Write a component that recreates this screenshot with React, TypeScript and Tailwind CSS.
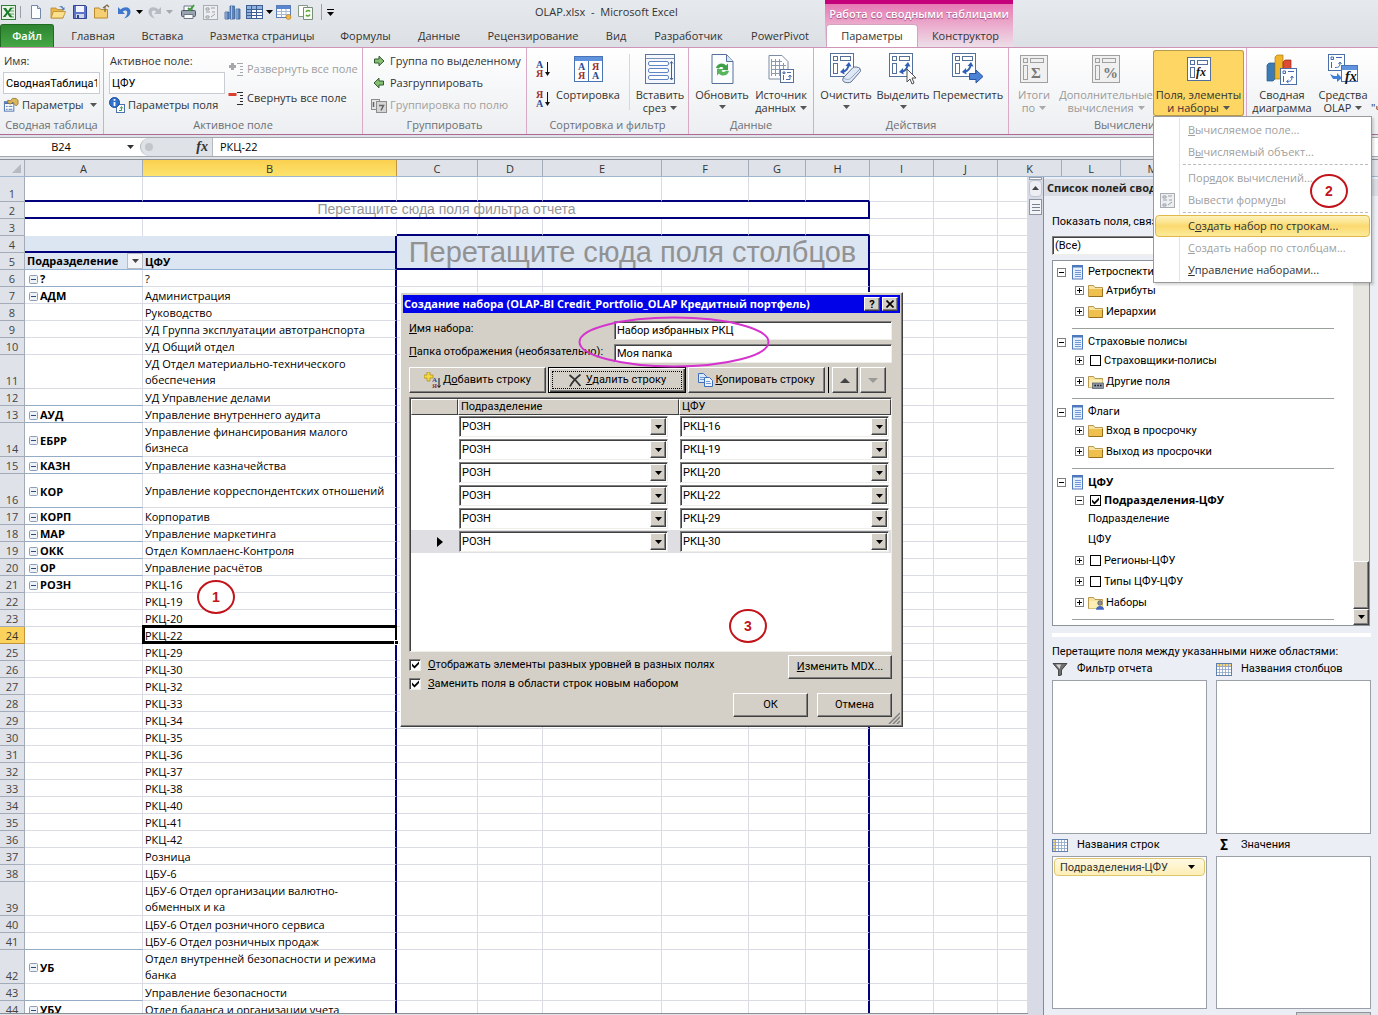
import React from 'react';
import clsx from 'clsx';

const RAISED = 'bg-[#d4d0c8] border border-white border-r-[#404040] border-b-[#404040] shadow-[inset_-1px_-1px_0_#808080]';
const SUNKEN = 'bg-white border border-[#808080] border-r-[#f0eee8] border-b-[#f0eee8] shadow-[inset_1px_1px_0_#404040]';
const UI_FONT = "font-['Open_Sans',sans-serif]";
const FORM_FONT = "font-['Roboto',sans-serif]";

/* ---------- icons ---------- */

const Caret = ({ className = 'text-[#555]' }: { className?: string }) => (
  <svg width="7" height="4" viewBox="0 0 7 4" className={clsx('inline-block shrink-0', className)}>
    <path d="M0 0h7L3.500 4z" fill="currentColor" />
  </svg>
);

const ExcelLogo = () => (
  <svg width="17" height="17" viewBox="0 0 17 17">
    <rect x="1.500" y="1.500" width="14" height="14" fill="#e9f5e4" stroke="#2e7d3a" />
    <path d="M10 4h4M10 7h4M10 10h4M10 13h4" stroke="#5ba35f" />
    <path d="M3 4h3l2 3 2-3h2.500L9 8.500l3.500 4.500h-3L7.500 10 5.500 13H2.800l3.500-4.500z" fill="#1e7a31" />
  </svg>
);

const NewDoc = () => (
  <svg width="16" height="16" viewBox="0 0 16 16">
    <path d="M3.500 1.500h6l3 3v10h-9z" fill="#fdfeff" stroke="#7488a8" />
    <path d="M9.500 1.500v3h3" fill="#d6e0ef" stroke="#7488a8" />
  </svg>
);

const OpenFolder = () => (
  <svg width="16" height="16" viewBox="0 0 16 16">
    <path d="M1 4h5l1 1.500h6V14H1z" fill="#e8b64a" stroke="#b98a2b" strokeWidth=".8" />
    <path d="M3.500 7.500H15.500L13 14H1z" fill="#fbe08d" stroke="#b98a2b" strokeWidth=".8" />
    <path d="M9 3c2-2 4-1 4.500 1l1-1v3h-3l1-1c-.5-1.500-2-2-3.500-2z" fill="#5a7fb8" />
  </svg>
);

const SaveIcon = () => (
  <svg width="16" height="16" viewBox="0 0 16 16">
    <path d="M1.500 1.500h12l1 1v12h-13z" fill="#5d74c9" stroke="#33448f" />
    <rect x="4" y="2" width="8" height="6" fill="#f2f5fd" />
    <rect x="4" y="10" width="8" height="4" fill="#cfd6ea" />
    <rect x="5" y="11" width="2" height="3" fill="#33448f" />
  </svg>
);

const FolderUp = () => (
  <svg width="16" height="16" viewBox="0 0 16 16">
    <path d="M.5 4h5l1 1.500h7V14H.5z" fill="#f6cf72" stroke="#b98a2b" />
    <path d="M11 8V2M9 4l4-3 2 2" stroke="#7b6a46" fill="none" strokeWidth="1.200" />
  </svg>
);

const UndoIcon = ({ color }: { color: string }) => (
  <svg width="15" height="15" viewBox="0 0 15 15">
    <path d="M1 2v7h7L5.800 6.800C7.500 5 10 5.200 10.200 7.500c.1 2-1 4-3.200 6 4-1 6.500-3.500 6.500-6.800C13.500 2 8 .500 3.500 4.500z" fill={color} />
  </svg>
);

const PrinterIcon = () => (
  <svg width="17" height="16" viewBox="0 0 17 16">
    <path d="M4 6V2h8v4" fill="#fff" stroke="#6d7686" />
    <rect x="1.500" y="6.500" width="14" height="6" rx="1" fill="#9aa3b0" stroke="#4f5866" />
    <path d="M4 10.500h9v4H4z" fill="#fff" stroke="#6d7686" />
    <path d="M8 4l2 2 4-5" stroke="#3c9a3c" strokeWidth="2" fill="none" />
  </svg>
);

const GraySheet = () => (
  <svg width="15" height="15" viewBox="0 0 15 15">
    <rect x=".5" y=".5" width="14" height="14" fill="#eceef0" stroke="#a9adb3" />
    <path d="M3 3h3v2H3zM8 3h4M3 7h4M9 7h3M3 11h3v2H3zM8 12l4-3" stroke="#9b9fa6" fill="none" />
  </svg>
);

const BarsIcon = () => (
  <svg width="17" height="16" viewBox="0 0 17 16">
    <path d="M1 8h4v7H1zM6 2h4.500v13H6zM12 5h4v10h-4z" fill="#5c84bd" stroke="#3b5f96" strokeWidth=".8" />
    <path d="M2 8v7M7.500 2v13M13 5v10" stroke="#a7c2e6" />
  </svg>
);

const TableIcon = () => (
  <svg width="17" height="15" viewBox="0 0 17 15">
    <rect x=".5" y=".5" width="16" height="13" fill="#fff" stroke="#3d5f91" />
    <path d="M1 1h15v3H1zM1 1h4v12H1z" fill="#8fb2de" />
    <path d="M1 4.500h15M1 7.500h15M1 10.500h15M5.500 1v13M10.500 1v13" stroke="#3d5f91" />
  </svg>
);

const FormIcon = () => (
  <svg width="16" height="15" viewBox="0 0 16 15">
    <rect x=".5" y=".5" width="14" height="12" fill="#fff" stroke="#5b7db5" />
    <path d="M1 1h13v3H1z" fill="#5b86cf" />
    <path d="M1 6.500h13M1 9.500h13M5.500 4v8M10 4v8" stroke="#a8b8d0" />
    <circle cx="12.500" cy="12" r="2.500" fill="#f0b64b" stroke="#b5822b" strokeWidth=".6" />
  </svg>
);

const SheetsIcon = () => (
  <svg width="16" height="16" viewBox="0 0 16 16">
    <path d="M.5 1.500h9v11h-9z" fill="#fff" stroke="#8a9a8a" />
    <path d="M5.500 3.500h9v12h-9z" fill="#f7fbf4" stroke="#7c8c7c" />
    <path d="M8 8c1-2 3-2 4-.5M12 10.500c-1 2-3 2-4 .5" stroke="#5ba52f" strokeWidth="1.500" fill="none" />
  </svg>
);

const PropsIcon = () => (
  <svg width="17" height="16" viewBox="0 0 17 16">
    <rect x="1.500" y="4.500" width="10" height="10" fill="#fff" stroke="#4a72b0" />
    <path d="M2 5h9v2H2z" fill="#4a72b0" />
    <path d="M3 9.500h2M6 9.500h4M3 12.500h2M6 12.500h4" stroke="#4a72b0" />
    <path d="M5 3l3 .500L10 1h4l2 2v4l-2 2-2-2-1.500-2L8 7 5 6z" fill="#dcb65c" stroke="#8d6b26" strokeWidth=".8" />
  </svg>
);

const FieldInfo = () => (
  <svg width="16" height="16" viewBox="0 0 16 16">
    <rect x="7.500" y="7.500" width="8" height="8" fill="#fff" stroke="#4a72b0" />
    <path d="M10 13.500h2.500v-3M11 11.500l1.500-2 1.500 2" stroke="#3a9a4a" fill="none" />
    <circle cx="5.500" cy="5.500" r="5" fill="#2f73cf" stroke="#1d4d96" />
    <path d="M5.500 2v1.800M5.500 5v4" stroke="#fff" strokeWidth="1.800" />
  </svg>
);

const ExpandIcon = ({ minus }: { minus?: boolean }) => (
  <svg width="16" height="15" viewBox="0 0 16 15">
    {minus ? <rect x=".5" y="2" width="8" height="3" fill="#d9402f" /> : <path d="M3 1h3v2h2v3H6v2H3V6H1V3h2z" fill="#a5a8ab" />}
    <path d="M9 1.500h6M12 4.500h3M12 7.500h3M12 10.500h3M9 13.500h6" stroke={minus ? '#2b2b2b' : '#a5a8ab'} />
  </svg>
);

const GreenArrow = ({ left }: { left?: boolean }) => (
  <svg width="12" height="12" viewBox="0 0 12 12" className={left ? 'rotate-180' : ''}>
    <path d="M1.500 4H6V1.200L11 6 6 10.800V8H1.500z" fill="#86bf74" stroke="#2f5a2c" />
  </svg>
);

const GroupField = () => (
  <svg width="16" height="15" viewBox="0 0 16 15">
    <rect x=".5" y="1.500" width="8" height="10" fill="#e5e5e5" stroke="#8d8d8d" />
    <rect x="5.500" y="3.500" width="10" height="11" fill="#d5d5d5" stroke="#8d8d8d" />
    <path d="M8 7.500h4.500l-2.500 5M2.500 4v5" stroke="#666" strokeWidth="1.500" fill="none" />
  </svg>
);

const SortIcon = ({ desc }: { desc?: boolean }) => (
  <svg width="15" height="18" viewBox="0 0 15 18" fontFamily="Liberation Serif" fontWeight="bold" fontSize="10">
    <text x="0" y="8" fill={desc ? '#9b3030' : '#2d4a91'}>{desc ? 'Я' : 'А'}</text>
    <text x="0" y="17" fill={desc ? '#2d4a91' : '#9b3030'}>{desc ? 'А' : 'Я'}</text>
    <path d="M11.500 2v12" stroke="#111" />
    <path d="M9 12h5l-2.500 4z" fill="#111" />
  </svg>
);

const SortBig = () => (
  <svg width="29" height="27" viewBox="0 0 29 27" fontFamily="Liberation Serif" fontWeight="bold" fontSize="10">
    <rect x=".5" y=".5" width="28" height="25" fill="#fff" stroke="#4a73b5" />
    <path d="M1 1h27v4H1z" fill="#5f93de" />
    <path d="M14.500 5v20" stroke="#4a73b5" />
    <text x="4" y="14" fill="#2d4a91">А</text>
    <text x="4" y="23" fill="#9b3030">Я</text>
    <text x="18" y="14" fill="#9b3030">Я</text>
    <text x="18" y="23" fill="#2d4a91">А</text>
  </svg>
);

const SlicerBig = () => (
  <svg width="30" height="30" viewBox="0 0 30 30">
    <rect x=".5" y=".5" width="29" height="29" fill="#f4f8fe" stroke="#5d7499" />
    <path d="M1 4.500h28" stroke="#7d92b5" />
    {[7, 14, 21].map(y => (
      <rect key={y} x="3.500" y={y + 0.5} width="20" height="4" rx="1.500" fill="#fff" stroke="#5f86c4" />
    ))}
    <path d="M26.500 8v17M25 9.500l1.500-2 1.500 2M25 24l1.500 2 1.500-2" stroke="#4a5f85" fill="none" />
  </svg>
);

const RefreshBig = () => (
  <svg width="23" height="30" viewBox="0 0 23 30">
    <path d="M1 .500h14.500L22 7.500V29.500H1z" fill="#fbfdff" stroke="#56709c" />
    <path d="M15.500 1v6.500H22" fill="#dbe6f5" stroke="#56709c" />
    <path d="M5 14c1-5 7.500-6 10-2.500L17 9.500v6.500h-6.500l2-2c-1.500-1.500-4-1-4.500.5z" fill="#3fa047" />
    <path d="M18 17c-1 5-7.500 6-10 2.500L6 21.500V15h6.500l-2 2c1.500 1.500 4 1 4.500-.5z" fill="#57b55c" />
  </svg>
);

const SourceBig = () => (
  <svg width="26" height="29" viewBox="0 0 26 29">
    <path d="M1 .500h13L20 6.500V24H1z" fill="#fff" stroke="#7d8ba3" />
    <path d="M3.500 4v17M7.500 4v17M11.500 4v17M15.500 8v13M3 6.500h11M3 10.500h15M3 14.500h15M3 18.500h15" stroke="#8d99ad" />
    <rect x="12.500" y="14.500" width="13" height="13" fill="#fff" stroke="#56709c" />
    <path d="M15 17h2v1.500h-2zM19 17.500h4M15.500 20v5M18 24.500h4v-4M20.500 22l1.500-2 1.500 2" stroke="#4a6ea8" fill="none" />
  </svg>
);

/* empty pivot layout, the base of most of the big buttons */
const PivotFrame = () => (
  <g stroke="#56709c" fill="#fff">
    <rect x=".5" y=".5" width="23" height="23" />
    <rect x="3.500" y="3.500" width="4" height="4" />
    <rect x="10.500" y="3.500" width="10" height="4" />
    <rect x="3.500" y="10.500" width="4" height="10" />
  </g>
);

const PivotArrow = () => (
  <g>
    <path d="M13 18.500c3-.5 5-3 5.500-6" stroke="#2f5fb5" strokeWidth="1.800" fill="none" />
    <path d="M15.500 13l3.500-4 2.500 4.500zM14 15l-4 4 4.500 2.500z" fill="#2f5fb5" />
  </g>
);

const ClearBig = () => (
  <svg width="32" height="32" viewBox="0 0 32 32">
    <PivotFrame />
    <PivotArrow />
    <path d="M14 24L23 14.500c1-1 6-.500 7 1s.5 3-.5 4L21 29c-1 1-6 1-7.500-.5s-.5-3.500.500-4.500z" fill="#dfe8f5" stroke="#5a6e8f" />
    <path d="M14 25c2 2 5 2 7 0l9-9" stroke="#93a6c4" fill="none" />
  </svg>
);

const SelectBig = () => (
  <svg width="28" height="32" viewBox="0 0 28 32">
    <PivotFrame />
    <PivotArrow />
    <path d="M18 16v13l3-3 2 5 2-1-2-5h4z" fill="#fff" stroke="#4d4d4d" />
  </svg>
);

const MoveBig = () => (
  <svg width="32" height="32" viewBox="0 0 32 32">
    <PivotFrame />
    <PivotArrow />
    <path d="M17.500 20.500H24V17l7 6.500-7 6.500v-3.500h-6.500z" fill="#4c82d6" stroke="#2b55a0" />
  </svg>
);

const CalcBig = ({ sign }: { sign: string }) => (
  <svg width="28" height="28" viewBox="0 0 28 28">
    <g stroke="#a0a0a0" fill="#f0f0f0">
      <rect x=".5" y=".5" width="27" height="27" />
      <rect x="3.500" y="3.500" width="4" height="4" />
      <rect x="10.500" y="3.500" width="13" height="4" />
      <rect x="3.500" y="10.500" width="4" height="14" />
    </g>
    <text x="11" y="23" fontSize="15" fontWeight="bold" fontFamily="Liberation Serif" fill="#777">{sign}</text>
  </svg>
);

const FxBig = () => (
  <svg width="24" height="24" viewBox="0 0 24 24">
    <PivotFrame />
    <text x="9" y="19" fontSize="12" fontStyle="italic" fontWeight="bold" fontFamily="Liberation Serif" fill="#111">fx</text>
  </svg>
);

const ChartBig = () => (
  <svg width="32" height="31" viewBox="0 0 32 31">
    <path d="M1 11l2-2h6v16l-2 2H1z" fill="#3d7bb5" stroke="#24598c" strokeWidth=".7" />
    <path d="M9 3l2-2h6v24H9z" fill="#f0b52a" stroke="#ad7d12" strokeWidth=".7" />
    <path d="M17 8l2-2h6v16h-8z" fill="#dd4c35" stroke="#97291a" strokeWidth=".7" />
    <rect x="14.500" y="14.500" width="16" height="16" fill="#fff" stroke="#4a6ea8" />
    <path d="M17 17h2.500v2.500H17zM22 17.500h6M17.500 22v6M21 27.500c4 0 5-1 5-5M24.500 24l1.500-2 1.500 2M22.500 26l-2 1.500 2 1.500" stroke="#3f68b0" fill="none" />
  </svg>
);

const OlapBig = () => (
  <svg width="32" height="31" viewBox="0 0 32 31">
    <rect x="1.500" y=".5" width="16" height="16" fill="#fff" stroke="#4a6ea8" />
    <path d="M4 3h2.500v2.500H4zM9 3.500h6M4.500 8v6M8 13.500c4 0 5-1 5-5M11.500 10l1.500-2 1.500 2" stroke="#3f68b0" fill="none" />
    <path d="M3 20l4 2h3v-3l5 5-5 4v-3H6z" fill="#3f7fd6" />
    <rect x="14.500" y="11.500" width="16" height="16" fill="#fff" stroke="#4a73b5" />
    <path d="M15 12h15v4H15z" fill="#5f93de" />
    <text x="18" y="27" fontSize="14" fontStyle="italic" fontWeight="bold" fontFamily="Liberation Serif" fill="#111">fx</text>
  </svg>
);

const PageIcon = () => (
  <svg width="12" height="15" viewBox="0 0 12 15" className="shrink-0">
    <rect x=".5" y=".5" width="10" height="13.500" fill="#e6effc" stroke="#4f79bd" />
    <path d="M1 1.500h9" stroke="#4f79bd" strokeWidth="2" />
    <path d="M3 5.500h6M3 7.500h6M3 9.500h6M3 11.500h6" stroke="#6f98d6" />
  </svg>
);

const FolderIcon = ({ kind }: { kind?: string }) => (
  <svg width="16" height="14" viewBox="0 0 16 14" className="shrink-0">
    <path d="M.5 1.500h5l1.500 2h7.500v9H.5z" fill="#f7e3a0" stroke="#a8812f" strokeWidth=".8" />
    <path d="M1 5h13.500v7.500H1z" fill={kind ? '#fbeeb4' : '#efc04e'} />
    {!kind && <path d="M1 12.500h13.500V5" stroke="#94701f" fill="none" />}
    {kind === 'more' && (
      <g>
        <rect x="4.500" y="8" width="11" height="5.500" fill="#8f98a8" stroke="#4d5664" strokeWidth=".7" />
        <path d="M6.500 10.500h1.500M9.300 10.500h1.500M12 10.500h1.500" stroke="#111" strokeWidth="1.500" />
      </g>
    )}
    {kind === 'set' && (
      <g>
        <circle cx="12" cy="7" r="2.300" fill="#8b8f96" stroke="#444" strokeWidth=".6" />
        <path d="M8 13.800c0-5 8-5 8 0z" fill="#3f66c4" />
      </g>
    )}
  </svg>
);

const Expander = ({ open }: { open?: boolean }) => (
  <svg width="9" height="9" viewBox="0 0 9 9" className="shrink-0">
    <rect x=".5" y=".5" width="8" height="8" fill="#fff" stroke="#808080" />
    <path d={open ? 'M2 4.500h5' : 'M2 4.500h5M4.500 2v5'} stroke="#000" />
  </svg>
);

const FilterIcon = () => (
  <svg width="16" height="13" viewBox="0 0 16 13">
    <path d="M1 .500h14L9.500 7v5l-3 .8V7z" fill="#6e6e6e" stroke="#2f2f2f" strokeWidth=".8" />
    <path d="M4 1.500h5L7.500 6z" fill="#d5d5d5" />
  </svg>
);

const LabelsIcon = ({ rows }: { rows?: boolean }) => (
  <svg width="16" height="13" viewBox="0 0 16 13">
    <rect x=".5" y=".5" width="15" height="12" fill="#fff" stroke="#5f7fae" />
    <path d={rows ? 'M1 1h3v11H1z' : 'M1 1h14v3H1z'} fill="#f2d27b" />
    <path d="M1 3.500h14M1 6.500h14M1 9.500h14M3.500 1v11M6.500 1v11M9.500 1v11M12.500 1v11" stroke="#8aa2c6" strokeWidth=".8" />
  </svg>
);

/* ---------- ribbon ---------- */

const QAT: { name: string; icon: React.ReactNode; className?: string }[] = [
  { name: 'Создать', icon: <NewDoc /> },
  { name: 'Открыть', icon: <OpenFolder /> },
  { name: 'Сохранить', icon: <SaveIcon /> },
  { name: 'Папка', icon: <FolderUp /> },
  { name: 'Отменить', icon: <UndoIcon color="#3f77cc" /> },
  { name: 'Список отмены', icon: <Caret className="text-black" />, className: 'w-2' },
  { name: 'Вернуть', icon: <span className="-scale-x-100"><UndoIcon color="#b7bcc3" /></span> },
  { name: 'Список возврата', icon: <Caret className="text-[#a5a9ae]" />, className: 'w-2' },
  { name: 'Печать', icon: <PrinterIcon />, className: 'w-[22px] ml-1' },
  { name: 'Лист', icon: <GraySheet /> },
  { name: 'Диаграмма', icon: <BarsIcon /> },
  { name: 'Таблица', icon: <TableIcon /> },
  { name: 'Варианты таблицы', icon: <Caret className="text-black" />, className: 'w-2' },
  { name: 'Форма', icon: <FormIcon /> },
  { name: 'Обновить все', icon: <SheetsIcon /> },
];

const TABS = [
  { label: 'Главная', width: 'w-[70px]' },
  { label: 'Вставка', width: 'w-[69px]' },
  { label: 'Разметка страницы', width: 'w-[130px]' },
  { label: 'Формулы', width: 'w-[77px]' },
  { label: 'Данные', width: 'w-[70px]' },
  { label: 'Рецензирование', width: 'w-[118px]' },
  { label: 'Вид', width: 'w-[48px]' },
  { label: 'Разработчик', width: 'w-[97px]' },
  { label: 'PowerPivot', width: 'w-[86px]' },
];

const Header = () => (
  <header className="flex h-[47px] shrink-0 bg-linear-to-b from-[#e6eaee] to-[#dcdfe4]">
    <div className="flex flex-col shrink-0">
      <div className="flex h-6 items-center text-[#333]">
        <div className="flex w-[535px] items-center">
          <ExcelLogo />
          <span className="ml-[3px] mr-1 h-3 w-px bg-[#9aa0a8]" />
          {QAT.map(item => (
            <button key={item.name} aria-label={item.name} className={clsx('flex h-5 items-center justify-center', item.className || 'w-[22px]')}>
              {item.icon}
            </button>
          ))}
          <span className="ml-1 h-4 w-px bg-[#9aa0a8]" />
          <button aria-label="Настройка панели" className="flex w-4 flex-col items-center gap-0.5">
            <span className="h-px w-[7px] bg-black" />
            <Caret className="text-black" />
          </button>
        </div>
        <h1>OLAP.xlsx&nbsp; -&nbsp; Microsoft Excel</h1>
      </div>
      <nav className="flex h-[23px] items-stretch text-[#333]">
        <button className="mr-1 w-[54px] rounded-t-[3px] border border-b-0 border-[#1f6b22] bg-linear-to-b from-[#2f8431] to-[#45a845] font-semibold text-white">Файл</button>
        {TABS.map(tab => (
          <button key={tab.label} className={clsx('whitespace-nowrap', tab.width)}>{tab.label}</button>
        ))}
      </nav>
    </div>
    <div className="ml-0.5 flex w-[188px] shrink-0 flex-col border-t-4 border-[#c4007a] bg-linear-to-b from-[#e579b4] to-[#ecdfe8]">
      <div className="flex h-5 items-center justify-center whitespace-nowrap font-semibold text-white [text-shadow:0_1px_1px_#a04a7c]">
        Работа со сводными таблицами
      </div>
      <nav className="flex h-[23px] text-[#333]">
        <button className="ml-px w-[92px] rounded-t-sm border border-b-0 border-[#d5a3c0] bg-white">Параметры</button>
        <button className="flex-1">Конструктор</button>
      </nav>
    </div>
  </header>
);

interface BigButtonProps {
  icon: React.ReactNode;
  lines: string[];
  width: string;
  caret?: boolean;
  disabled?: boolean;
  active?: boolean;
}

const BigButton = ({ icon, lines, width, caret, disabled, active }: BigButtonProps) => (
  <button
    disabled={disabled}
    className={clsx(
      'flex h-[66px] shrink-0 flex-col items-center whitespace-nowrap rounded-[3px] leading-[13px]',
      width,
      disabled && 'text-[#9a9a9a]',
      active && 'bg-[#fdd663] ring-1 ring-[#b89b4a] ring-inset'
    )}
  >
    <span className="flex h-[38px] items-center justify-center">{icon}</span>
    {lines.map((line, i) => (
      <span key={line} className="flex items-center gap-1">
        {line}
        {caret && lines.length > 1 && i === 1 && <Caret className={disabled ? 'text-[#aaa]' : undefined} />}
      </span>
    ))}
    {caret && lines.length === 1 && <span className="flex h-3 items-center"><Caret /></span>}
  </button>
);

const SmallButton = ({ icon, label, disabled, caret }: { icon: React.ReactNode; label: string; disabled?: boolean; caret?: boolean }) => (
  <button disabled={disabled} className={clsx('flex h-[22px] items-center whitespace-nowrap', disabled && 'text-[#a0a0a0]')}>
    <span className="mr-[3px] flex w-4 justify-center">{icon}</span>
    {label}
    {caret && <span className="ml-1.5 flex"><Caret /></span>}
  </button>
);

const Group = ({ title, width, children }: { title: string; width: string; children: React.ReactNode }) => (
  <section className={clsx('flex flex-col border-r border-[#d9a9c6] pt-0.5 text-[#333]', width)}>
    <div className="flex h-[67px]">{children}</div>
    <h2 className="h-4 whitespace-nowrap text-center leading-4 text-[#6b6f75]">{title}</h2>
  </section>
);

const Ribbon = () => (
  <div className="flex h-[88px] shrink-0 overflow-hidden border-y border-t-[#cf95b8] border-b-[#b06a96] bg-linear-to-b from-white to-[#eceef1]">
    <Group title="Сводная таблица" width="w-[104px] shrink-0">
      <div className="flex flex-1 flex-col px-[3px]">
        <label htmlFor="pt-name" className="h-[22px] px-px leading-[22px]">Имя:</label>
        <input id="pt-name" defaultValue="СводнаяТаблица1" className={clsx('h-[22px] w-full border border-[#c9ccd2] bg-white px-[2px] text-black', FORM_FONT)} />
        <SmallButton icon={<PropsIcon />} label="Параметры" caret />
      </div>
    </Group>
    <Group title="Активное поле" width="w-[259px] shrink-0">
      <div className="flex w-[121px] shrink-0 flex-col pl-[5px]">
        <label htmlFor="field-name" className="h-[22px] px-px leading-[22px]">Активное поле:</label>
        <input id="field-name" defaultValue="ЦФУ" className={clsx('h-[22px] w-full border border-[#c9ccd2] bg-white px-[2px] text-black', FORM_FONT)} />
        <SmallButton icon={<FieldInfo />} label="Параметры поля" />
      </div>
      <div className="flex flex-col gap-[7px] py-2 pl-[3px]">
        <SmallButton icon={<ExpandIcon />} label="Развернуть все поле" disabled />
        <SmallButton icon={<ExpandIcon minus />} label="Свернуть все поле" />
      </div>
    </Group>
    <Group title="Группировать" width="w-[164px] shrink-0">
      <div className="flex flex-col pl-2">
        <SmallButton icon={<GreenArrow />} label="Группа по выделенному" />
        <SmallButton icon={<GreenArrow left />} label="Разгруппировать" />
        <SmallButton icon={<GroupField />} label="Группировка по полю" disabled />
      </div>
    </Group>
    <Group title="Сортировка и фильтр" width="w-[162px] shrink-0">
      <div className="flex w-6 shrink-0 flex-col items-end gap-3 pt-[10px]">
        <button aria-label="Сортировать от А до Я"><SortIcon /></button>
        <button aria-label="Сортировать от Я до А"><SortIcon desc /></button>
      </div>
      <BigButton icon={<SortBig />} lines={['Сортировка']} width="w-[74px]" />
      <div className="mx-1 mt-1 h-14 w-px bg-[#d5d8dc]" />
      <BigButton icon={<SlicerBig />} lines={['Вставить', 'срез']} width="w-[52px]" caret />
    </Group>
    <Group title="Данные" width="w-[125px] shrink-0">
      <BigButton icon={<RefreshBig />} lines={['Обновить']} width="w-[66px]" caret />
      <BigButton icon={<SourceBig />} lines={['Источник', 'данных']} width="w-[52px]" caret />
    </Group>
    <Group title="Действия" width="w-[195px] shrink-0">
      <BigButton icon={<ClearBig />} lines={['Очистить']} width="w-[64px]" caret />
      <BigButton icon={<SelectBig />} lines={['Выделить']} width="w-[50px]" caret />
      <BigButton icon={<MoveBig />} lines={['Переместить']} width="w-[80px]" />
    </Group>
    <Group title="Вычисления" width="w-[238px] shrink-0">
      <BigButton icon={<CalcBig sign="Σ" />} lines={['Итоги', 'по']} width="w-[50px]" caret disabled />
      <BigButton icon={<CalcBig sign="%" />} lines={['Дополнительные', 'вычисления']} width="w-[94px]" caret disabled />
      <BigButton icon={<FxBig />} lines={['Поля, элементы', 'и наборы']} width="w-[91px]" caret active />
    </Group>
    <Group title="Сервис" width="flex-1">
      <BigButton icon={<ChartBig />} lines={['Сводная', 'диаграмма']} width="w-[70px]" />
      <BigButton icon={<OlapBig />} lines={['Средства', 'OLAP']} width="w-[52px]" caret />
      <div className="whitespace-nowrap pl-0.5 pt-[51px] leading-[13px]">"что если"</div>
    </Group>
  </div>
);

const FormulaBar = () => (
  <div className="flex h-[25px] shrink-0 items-start border-b border-[#8b9097] bg-[#dfe2e7] pt-0.5">
    <div className="flex h-5 w-full border-y border-[#a3a8b0] bg-white">
      <div className="flex w-[140px] items-center">
        <input aria-label="Имя ячейки" defaultValue="B24" className="w-[122px] text-center text-black" />
        <button aria-label="Список имен" className="flex w-4 justify-center"><Caret className="text-[#333]" /></button>
      </div>
      <div className="flex w-[73px] items-center justify-between rounded-l-full border-l border-r border-[#b5b9c0] bg-[#dfe2e7] pl-1 pr-1">
        <span className="h-2 w-2 rounded-full bg-[#c3c6cb]" />
        <button aria-label="Вставить функцию" className="font-['Liberation_Serif',serif] text-sm font-bold italic leading-none text-[#333]">fx</button>
      </div>
      <input aria-label="Строка формул" defaultValue="РКЦ-22" className="flex-1 px-[7px] text-black" />
    </div>
  </div>
);

/* ---------- sheet ---------- */

const COLUMNS = [
  { name: 'A', width: 'w-[118px]' },
  { name: 'B', width: 'w-[254px]', active: true },
  { name: 'C', width: 'w-[81px]' },
  { name: 'D', width: 'w-[65px]' },
  { name: 'E', width: 'w-[119px]' },
  { name: 'F', width: 'w-[87px]' },
  { name: 'G', width: 'w-[57px]' },
  { name: 'H', width: 'w-[64px]' },
  { name: 'I', width: 'w-[64px]' },
  { name: 'J', width: 'w-[64px]' },
  { name: 'K', width: 'w-[64px]' },
  { name: 'L', width: 'w-[59px]' },
  { name: 'M', width: 'w-[64px]' },
];

const ColumnHeaders = () => (
  <div className="flex h-[17px] shrink-0 overflow-hidden border-b border-[#9eb6ce] bg-[#dfe2e8] text-[#333]">
    <div className="flex w-[25px] shrink-0 items-end justify-end border-r border-[#a3abb8] p-[3px]">
      <svg width="9" height="9" viewBox="0 0 9 9"><path d="M9 0v9H0z" fill="#b5bac3" /></svg>
    </div>
    {COLUMNS.map(col => (
      <div
        key={col.name}
        className={clsx(
          'shrink-0 border-r text-center leading-[18px]',
          col.width,
          col.active ? 'border-[#c2943b] bg-linear-to-b from-[#fbd04f] to-[#fce36c]' : 'border-[#a3abb8]'
        )}
      >
        {col.name}
      </div>
    ))}
  </div>
);

interface RowData {
  a?: string;
  b: string;
  tall?: boolean;
  end?: boolean; // last row of an outer group
}

// rows 6 and on
const ROWS: RowData[] = [
  { a: '?', b: '?', end: true },
  { a: 'АДМ', b: 'Администрация' },
  { b: 'Руководство' },
  { b: 'УД Группа эксплуатации автотранспорта' },
  { b: 'УД Общий отдел' },
  { b: 'УД Отдел материально-технического обеспечения', tall: true },
  { b: 'УД Управление делами', end: true },
  { a: 'АУД', b: 'Управление внутреннего аудита', end: true },
  { a: 'ЕБРР', b: 'Управление финансирования малого бизнеса', tall: true, end: true },
  { a: 'КАЗН', b: 'Управление казначейства', end: true },
  { a: 'КОР', b: 'Управление корреспондентских отношений', tall: true, end: true },
  { a: 'КОРП', b: 'Корпоратив', end: true },
  { a: 'МАР', b: 'Управление маркетинга', end: true },
  { a: 'ОКК', b: 'Отдел Комплаенс-Контроля', end: true },
  { a: 'ОР', b: 'Управление расчётов', end: true },
  { a: 'РОЗН', b: 'РКЦ-16' },
  { b: 'РКЦ-19' },
  { b: 'РКЦ-20' },
  { b: 'РКЦ-22' },
  { b: 'РКЦ-29' },
  { b: 'РКЦ-30' },
  { b: 'РКЦ-32' },
  { b: 'РКЦ-33' },
  { b: 'РКЦ-34' },
  { b: 'РКЦ-35' },
  { b: 'РКЦ-36' },
  { b: 'РКЦ-37' },
  { b: 'РКЦ-38' },
  { b: 'РКЦ-40' },
  { b: 'РКЦ-41' },
  { b: 'РКЦ-42' },
  { b: 'Розница' },
  { b: 'ЦБУ-6' },
  { b: 'ЦБУ-6 Отдел организации валютно-обменных и ка', tall: true },
  { b: 'ЦБУ-6 Отдел розничного сервиса' },
  { b: 'ЦБУ-6 Отдел розничных продаж', end: true },
  { a: 'УБ', b: 'Отдел внутренней безопасности и режима банка', tall: true },
  { b: 'Управление безопасности', end: true },
  { a: 'УБУ', b: 'Отдел баланса и организации учета' },
];

const CELL = 'border-b border-r border-[#d9dce4] p-0';
const NAVY = 'border-[#00007c]';
const LINE = 'pt-0.5 leading-[14px]';

const RowHeader = ({ n }: { n: number }) => (
  <th
    className={clsx(
      'border-b border-r p-0 text-center align-bottom font-normal',
      LINE,
      n === 24 ? 'border-[#c2943b] bg-[#fbd35c] text-[#333]' : 'border-[#a3abb8] bg-[#dfe2e8] text-[#444]'
    )}
  >
    {n}
  </th>
);

const Blanks = ({ count }: { count: number }) => (
  <>
    {Array.from({ length: count }, (_, i) => <td key={i} className={CELL} />)}
  </>
);

const Sheet = () => (
  <div className="min-w-0 flex-1 overflow-hidden border-b border-[#8b9097] bg-white">
    <table className="w-full table-fixed border-separate border-spacing-0 text-black">
      <colgroup>
        <col className="w-[25px]" />
        {COLUMNS.slice(0, 10).map(col => <col key={col.name} className={col.width} />)}
        <col />
      </colgroup>
      <tbody>
        <tr className="h-[25px]">
          <RowHeader n={1} />
          {Array.from({ length: 8 }, (_, i) => (
            <td key={i} className="border-b-2 border-r border-b-[#00007c] border-r-[#d9dce4] p-0" />
          ))}
          <Blanks count={3} />
        </tr>
        <tr className="h-[17px]">
          <RowHeader n={2} />
          <td colSpan={8} className={clsx("border-b-2 border-r-2 p-0 text-center font-['Liberation_Sans',sans-serif] text-[14px] leading-[15px] text-[#959595]", NAVY)}>
            Перетащите сюда поля фильтра отчета
          </td>
          <Blanks count={3} />
        </tr>
        <tr className="h-[17px]">
          <RowHeader n={3} />
          <td className="border-r border-[#d9dce4] p-0" />
          <td className="border-r border-[#d9dce4] p-0" />
          {Array.from({ length: 6 }, (_, i) => (
            <td key={i} className="border-b-2 border-r border-b-[#00007c] border-r-[#d9dce4] p-0" />
          ))}
          <Blanks count={3} />
        </tr>
        <tr className="h-[17px]">
          <RowHeader n={4} />
          <td className={clsx('border-b-2 bg-[#dce5f2] p-0', NAVY)} />
          <td className={clsx('border-b-2 border-r-2 bg-[#dce5f2] p-0', NAVY)} />
          <td colSpan={6} rowSpan={2} className={clsx("border-b-2 border-r-2 bg-[#dce5f2] p-0 text-center font-['Liberation_Sans',sans-serif] text-[29px] leading-[30px] whitespace-nowrap text-[#929292]", NAVY)}>
            Перетащите сюда поля столбцов
          </td>
          <Blanks count={3} />
        </tr>
        <tr className="h-[17px]">
          <RowHeader n={5} />
          <td className="border-b border-[#95b3d7] bg-[#dce5f2] p-0 font-bold">
            <div className="flex h-4 items-center justify-between pl-0.5">
              Подразделение
              <button aria-label="Фильтр" className="flex h-4 w-4 items-center justify-center border border-[#b5bac3] bg-[#f3f5f8]"><Caret className="text-[#444]" /></button>
            </div>
          </td>
          <td className={clsx('border-r-2 border-b border-b-[#95b3d7] border-r-[#00007c] bg-[#dce5f2] p-0 pl-0.5 font-bold', LINE)}>ЦФУ</td>
          <Blanks count={3} />
        </tr>
        {ROWS.map((row, i) => {
          const n = i + 6;
          return (
            <tr key={n} className={row.tall ? 'h-[34px]' : 'h-[17px]'}>
              <RowHeader n={n} />
              <td className={clsx('border-b border-r border-r-[#d9dce4] p-0 align-middle font-bold', row.end ? 'border-b-[#95acc9]' : 'border-b-[#d9dce4]', LINE)}>
                {row.a && (
                  <div className="flex items-center gap-0.5 pl-1">
                    <svg width="9" height="9" viewBox="0 0 9 9">
                      <rect x=".5" y=".5" width="8" height="8" rx="1" fill="#edf2f9" stroke="#8c9cb5" />
                      <path d="M2 4.500h5" stroke="#334a72" />
                    </svg>
                    {row.a}
                  </div>
                )}
              </td>
              <td
                className={clsx(
                  'border-r-2 border-b border-b-[#d9dce4] border-r-[#00007c] p-0 pl-0.5 pr-2 align-middle',
                  row.tall ? 'leading-4' : LINE,
                  n === 24 && 'relative'
                )}
              >
                {row.b}
                {n === 24 && (
                  <div className="absolute -left-px -top-0.5 -right-0.5 -bottom-px border-3 border-black border-r-2">
                    <div className="absolute -bottom-1 -right-1 h-[5px] w-[5px] border border-white bg-black" />
                  </div>
                )}
              </td>
              <Blanks count={5} />
              <td className="border-b border-r-2 border-b-[#d9dce4] border-r-[#00007c] p-0" />
              <Blanks count={3} />
            </tr>
          );
        })}
      </tbody>
    </table>
  </div>
);

const SheetScroll = () => (
  <div className="flex w-[15px] shrink-0 flex-col items-center bg-[#d8dbe5]">
    <div className="h-[3px] w-[13px] border border-[#9aa0ab] bg-white" />
    <button aria-label="Вверх" className="flex h-[17px] w-[13px] items-center justify-center rounded-sm border border-[#c0c4cf] bg-[#eceef3]">
      <span className="rotate-180"><Caret className="text-[#444]" /></span>
    </button>
    <div className="mt-0.5 flex h-4 w-[13px] flex-col items-center justify-center gap-0.5 border border-[#8e94a1] bg-[#f2f4f8]">
      <span className="h-px w-2 bg-[#7b8191]" />
      <span className="h-px w-2 bg-[#7b8191]" />
      <span className="h-px w-2 bg-[#7b8191]" />
    </div>
  </div>
);

/* ---------- field list ---------- */

interface TreeItem {
  label: string;
  open?: boolean;
  check?: boolean;
  checked?: boolean;
  folder?: string;
  plain?: boolean;
}

const TREE: { label: string; bold?: boolean; items: TreeItem[] }[] = [
  { label: 'Ретроспективы', items: [{ label: 'Атрибуты' }, { label: 'Иерархии' }] },
  { label: 'Страховые полисы', items: [{ label: 'Страховщики-полисы', check: true }, { label: 'Другие поля', folder: 'more' }] },
  { label: 'Флаги', items: [{ label: 'Вход в просрочку' }, { label: 'Выход из просрочки' }] },
  {
    label: 'ЦФУ',
    bold: true,
    items: [
      { label: 'Подразделения-ЦФУ', check: true, checked: true, open: true },
      { label: 'Подразделение', plain: true },
      { label: 'ЦФУ', plain: true },
      { label: 'Регионы-ЦФУ', check: true },
      { label: 'Типы ЦФУ-ЦФУ', check: true },
      { label: 'Наборы', folder: 'set' },
    ],
  },
];

const Tick = ({ checked, className }: { checked?: boolean; className: string }) => (
  <span className="grid shrink-0">
    <input type="checkbox" defaultChecked={checked} className={clsx('peer col-start-1 row-start-1 appearance-none', className)} />
    <svg viewBox="0 0 11 11" className="pointer-events-none invisible col-start-1 row-start-1 h-[11px] w-[11px] place-self-center peer-checked:visible">
      <path d="M2 4.500l2.500 2.500L9 2.500v2.500L4.500 9.500 2 7z" fill="#000" />
    </svg>
  </span>
);

const TreeRow = ({ item }: { item: TreeItem }) => {
  if (item.plain) return <div className="h-[21px] pl-[35px] leading-[19px]">{item.label}</div>;
  return (
    <div className={clsx('flex items-center pl-[22px]', item.open ? clsx('h-[18px] font-bold', UI_FONT) : 'h-[21px] pb-0.5')}>
      <Expander open={item.open} />
      {item.check ? (
        <label className="ml-1.5 flex items-center gap-[3px]">
          <Tick checked={item.checked} className="h-[11px] w-[11px] border border-black bg-white" />
          {item.label}
        </label>
      ) : (
        <span className="ml-1 flex items-center gap-0.5">
          <FolderIcon kind={item.folder} />
          {item.label}
        </span>
      )}
    </div>
  );
};

const AreaTitle = ({ icon, label }: { icon: React.ReactNode; label: string }) => (
  <div className="flex h-[22px] items-center">
    <span className="mr-[9px] flex w-4 justify-center">{icon}</span>
    {label}
  </div>
);

const AREA = 'flex-1 border border-[#9ba0a8] bg-white p-px';

const FieldList = () => (
  <aside className={clsx('flex w-[335px] shrink-0 flex-col border-l border-[#868b98] bg-[#ebeef4] text-black', FORM_FONT)}>
    <h2 className={clsx('mt-0.5 h-[17px] bg-[#d9dce3] pl-[3px] font-bold leading-[18px] text-[#222]', UI_FONT)}>Список полей сводной таблицы</h2>
    <div className="flex flex-1 flex-col pl-2 pr-[7px]">
      <label htmlFor="links" className="mt-4 h-[24px] leading-5">Показать поля, связанные с:</label>
      <select id="links" className={clsx('h-[19px] w-[318px] appearance-none pl-0.5', SUNKEN)}>
        <option>(Все)</option>
      </select>
      <div className="mt-[5px] flex h-[366px] w-[318px] border border-[#8f949c] bg-white">
        <div className="flex-1 overflow-hidden pt-0.5">
          {TREE.map(group => (
            <div key={group.label}>
              <div className={clsx('flex h-[18px] items-center pl-1', group.bold && clsx('font-bold', UI_FONT))}>
                <Expander open />
                <span className="ml-1.5 mr-1 flex"><PageIcon /></span>
                {group.label}
              </div>
              {group.items.map(item => <TreeRow key={item.label} item={item} />)}
              <div className="ml-[19px] mr-[19px] flex h-[10px] items-center">
                <hr className="w-full border-t border-[#9aa09a]" />
              </div>
            </div>
          ))}
        </div>
        <div className="flex w-4 flex-col bg-[#e8e6e1]">
          <div className={clsx('mt-auto h-12', RAISED)} />
          <button aria-label="Вниз" className={clsx('flex h-4 items-center justify-center', RAISED)}><Caret className="text-black" /></button>
        </div>
      </div>
      <div className="mt-[7px] h-1 bg-white" />
      <p className="mt-[7px] h-[14px] whitespace-nowrap leading-4">Перетащите поля между указанными ниже областями:</p>
      <div className="flex gap-[9px]">
        <div className="flex flex-1 flex-col">
          <AreaTitle icon={<FilterIcon />} label="Фильтр отчета" />
          <div className={clsx(AREA, 'min-h-[154px]')} />
          <AreaTitle icon={<LabelsIcon rows />} label="Названия строк" />
          <div className={clsx(AREA, 'min-h-[153px]')}>
            <button className="flex h-[18px] w-full items-center justify-between rounded-sm border border-[#dcc873] bg-linear-to-b from-[#fff9e3] to-[#fdeeb4] pl-[5px] pr-[9px] leading-none text-[#333]">
              Подразделения-ЦФУ
              <Caret className="text-black" />
            </button>
          </div>
        </div>
        <div className="flex flex-1 flex-col">
          <AreaTitle icon={<LabelsIcon />} label="Названия столбцов" />
          <div className={clsx(AREA, 'min-h-[154px]')} />
          <AreaTitle icon={<span className="text-sm font-bold leading-none">Σ</span>} label="Значения" />
          <div className={clsx(AREA, 'min-h-[153px]')} />
        </div>
      </div>
      <div className="mt-[3px] h-3 w-[75px] self-end border border-[#8f949c] bg-[#d0d0d0]" />
    </div>
  </aside>
);

/* ---------- menu ---------- */

const MENU: { label: React.ReactNode; disabled?: boolean; active?: boolean; icon?: boolean; sep?: boolean }[] = [
  { label: <><u>В</u>ычисляемое поле...</>, disabled: true },
  { label: <>В<u>ы</u>числяемый объект...</>, disabled: true },
  { label: <>Пор<u>я</u>док вычислений...</>, disabled: true, sep: true },
  { label: <>Вывести форму<u>л</u>ы</>, disabled: true, icon: true },
  { label: <>С<u>о</u>здать набор по строкам...</>, active: true, sep: true },
  { label: <><u>С</u>оздать набор по столбцам...</>, disabled: true },
  { label: <><u>У</u>правление наборами...</> },
];

const CalcMenu = () => (
  <div className="absolute left-[1153px] top-[116px] w-[219px] border border-[#9a9a9a] bg-white p-px shadow-[2px_2px_2px_rgba(0,0,0,0.15)]">
    <ul className="bg-[linear-gradient(to_right,transparent_24px,#e2e3e5_24px,#e2e3e5_25px,transparent_25px)] pt-px">
      {MENU.map((item, i) => (
        <li key={i}>
          {item.sep && <div className="mt-px mb-0.5 ml-7 mr-0.5 border-t border-dashed border-[#bdbdbd]" />}
          <button
            disabled={item.disabled}
            className={clsx(
              'flex h-[22px] w-full items-center rounded-sm border pl-1',
              item.active ? 'border-[#e0b84a] bg-linear-to-b from-[#fdf3bd] via-[#fbd96f] to-[#fdeb9a]' : 'border-transparent',
              item.disabled ? 'text-[#a0a0a0]' : 'text-[#333]'
            )}
          >
            <span className="flex w-7 shrink-0">{item.icon && <GraySheet />}</span>
            <span className="whitespace-nowrap">{item.label}</span>
          </button>
        </li>
      ))}
    </ul>
  </div>
);

/* ---------- dialog ---------- */

const Combo = ({ value, label }: { value: string; label: string }) => (
  <div className={clsx('flex h-[21px] w-[209px] p-px', SUNKEN)}>
    <select aria-label={label} className="min-w-0 flex-1 appearance-none pl-px leading-none">
      <option>{value}</option>
    </select>
    <span className={clsx('flex w-4 items-center justify-center', RAISED)}><Caret className="text-black" /></span>
  </div>
);

const SET_ROWS = ['РКЦ-16', 'РКЦ-19', 'РКЦ-20', 'РКЦ-22', 'РКЦ-29', 'РКЦ-30'];

const TH = 'border border-white border-b-[#404040] border-r-[#404040] bg-[#d4d0c8] p-0 pl-0.5 text-left font-normal';

const SetDialog = () => (
  <div role="dialog" className={clsx('absolute left-[400px] top-[292px] w-[503px] p-[2px] text-black', FORM_FONT, RAISED)}>
    <div className="flex h-[18px] items-center gap-0.5 bg-[#0202e8] pl-px pr-0.5 font-bold text-white">
      <h2 className={clsx('flex-1 whitespace-nowrap', UI_FONT)}>Создание набора (OLAP-BI Credit_Portfolio_OLAP Кредитный портфель)</h2>
      <button aria-label="Справка" className={clsx('h-[14px] w-4 font-bold leading-none text-black', RAISED)}>?</button>
      <button aria-label="Закрыть" className={clsx('flex h-[14px] w-4 items-center justify-center', RAISED)}>
        <svg width="8" height="8" viewBox="0 0 8 8"><path d="M.5.5l7 7M7.500.5l-7 7" stroke="#000" strokeWidth="1.600" /></svg>
      </button>
    </div>
    <div className="pb-[7px] pl-1.5 pr-2">
      <div className="mt-1.5 flex h-[23px] items-center">
        <label htmlFor="set-name" className="w-[205px] pb-1"><u>И</u>мя набора:</label>
        <input id="set-name" defaultValue="Набор избранных РКЦ" className={clsx('h-[19px] min-w-0 flex-1 px-0.5', SUNKEN)} />
      </div>
      <div className="flex h-[23px] items-center">
        <label htmlFor="set-folder" className="w-[205px] whitespace-nowrap pb-1"><u>П</u>апка отображения (необязательно):</label>
        <input id="set-folder" defaultValue="Моя папка" className={clsx('h-[19px] min-w-0 flex-1 px-0.5', SUNKEN)} />
      </div>
      <div className="mt-0.5 flex h-[26px] whitespace-nowrap">
        <button className={clsx('flex w-[137px] items-center justify-center gap-0.5', RAISED)}>
          <svg width="17" height="17" viewBox="0 0 17 17" fontFamily="Liberation Serif" fontSize="7" fontWeight="bold">
            <path d="M3 0h3v3h3v3H6v3H3V6H0V3h3z" fill="#f5d93c" stroke="#a88a1a" strokeWidth=".7" />
            <text x="8" y="10" fill="#2d4a91">А</text>
            <text x="8" y="16" fill="#9b3030">Я</text>
            <path d="M15 6v9M13.500 13.500l1.500 2 1.500-2" stroke="#111" fill="none" />
          </svg>
          <span>Д<u>о</u>бавить строку</span>
        </button>
        <button className="ml-0.5 flex w-[138px] items-center border border-black bg-[#d4d0c8] p-[3px] shadow-[inset_1px_1px_0_#fff,inset_-1px_-1px_0_#404040,inset_-2px_-2px_0_#808080]">
          <span className="flex h-full w-full items-center justify-center gap-1 border border-dotted border-black">
            <svg width="14" height="13" viewBox="0 0 14 13"><path d="M1.500 1c4 3 8 7 11 11M12.500.5C8 4 4 8 2 12.500" stroke="#333" strokeWidth="1.800" fill="none" /></svg>
            <span><u>У</u>далить строку</span>
          </span>
        </button>
        <button className={clsx('ml-0.5 flex w-[137px] items-center justify-center gap-0.5', RAISED)}>
          <svg width="15" height="14" viewBox="0 0 15 14">
            <path d="M.5.5h5l3 3v6h-8z" fill="#dbe9fb" stroke="#3f6fb8" />
            <path d="M6.500 4.500h5l3 3v6h-8z" fill="#eef5fe" stroke="#3f6fb8" />
            <path d="M2 4.500h4M2 6.500h4M8 8.500h4M8 10.500h5" stroke="#6f98d6" />
          </svg>
          <span><u>К</u>опировать строку</span>
        </button>
        <span className="mx-[3px] w-px bg-black" />
        <button aria-label="Выше" className={clsx('flex w-[26px] items-center justify-center', RAISED)}>
          <svg width="10" height="5" viewBox="0 0 10 5"><path d="M0 5h10L5 0z" fill="#444" /></svg>
        </button>
        <button aria-label="Ниже" className={clsx('ml-0.5 flex w-[26px] items-center justify-center', RAISED)}>
          <svg width="10" height="5" viewBox="0 0 10 5"><path d="M0 0h10L5 5z" fill="#9a9a96" /></svg>
        </button>
      </div>
      <div className={clsx('mt-1 h-[255px] pl-px pt-px', SUNKEN)}>
        <table className="w-full table-fixed border-separate border-spacing-0">
          <colgroup>
            <col className="w-[47px]" />
            <col className="w-[221px]" />
            <col />
          </colgroup>
          <thead>
            <tr className="h-4 leading-[14px]">
              <th aria-label="Текущая строка" className={TH} />
              <th className={TH}>Подразделение</th>
              <th className={TH}>ЦФУ</th>
            </tr>
          </thead>
          <tbody>
            {SET_ROWS.map((value, i) => (
              <tr key={value} className={clsx('h-[23px]', i === 5 && 'bg-[#dfdfe3]')}>
                <td className="p-0 pl-[26px]">
                  {i === 5 && <svg width="6" height="10" viewBox="0 0 6 10"><path d="M0 0l6 5-6 5z" fill="#000" /></svg>}
                </td>
                <td className="p-0 pl-px"><Combo value="РОЗН" label="Подразделение" /></td>
                <td className="p-0 pl-px"><Combo value={value} label="ЦФУ" /></td>
              </tr>
            ))}
          </tbody>
        </table>
      </div>
      <div className="mt-[3px] flex items-start justify-between">
        <div>
          <label className="flex h-[19px] items-center gap-[7px]">
            <Tick checked className={clsx('h-3 w-3', SUNKEN)} />
            <span><u>О</u>тображать элементы разных уровней в разных полях</span>
          </label>
          <label className="flex h-[19px] items-center gap-[7px]">
            <Tick checked className={clsx('h-3 w-3', SUNKEN)} />
            <span><u>З</u>аменить поля в области строк новым набором</span>
          </label>
        </div>
        <button className={clsx('h-6 w-[104px]', RAISED)}><u>И</u>зменить MDX...</button>
      </div>
      <div className="flex justify-end gap-[9px]">
        <button className={clsx('h-6 w-[75px]', RAISED)}>ОК</button>
        <button className={clsx('h-6 w-[75px]', RAISED)}>Отмена</button>
      </div>
    </div>
    <svg width="12" height="12" viewBox="0 0 12 12" className="absolute bottom-0.5 right-0.5">
      <path d="M1 12L12 1M5 12l7-7M9 12l3-3" stroke="#808080" strokeWidth="1.500" />
    </svg>
  </div>
);

/* hand-drawn marks over the window */
const Mark = ({ n, className }: { n: number; className: string }) => (
  <div className={clsx("absolute flex h-[34px] w-[38px] items-center justify-center rounded-[50%] border-2 border-[#c2151b] font-['Liberation_Sans',sans-serif] text-sm font-bold text-[#c2151b]", className)}>
    {n}
  </div>
);

const App: React.FC = () => (
  <div className={clsx('relative flex h-screen w-full flex-col overflow-hidden bg-[#dfe2e7] text-[11px] leading-4', UI_FONT)}>
    <Header />
    <Ribbon />
    <FormulaBar />
    <ColumnHeaders />
    <main className="flex min-h-0 flex-1">
      <div className="flex min-w-0 flex-1 pb-px">
        <Sheet />
      </div>
      <SheetScroll />
      <FieldList />
    </main>
    <CalcMenu />
    <SetDialog />
    <svg className="pointer-events-none absolute left-[578px] top-[316px]" width="192" height="52" viewBox="0 0 192 52">
      <ellipse cx="96" cy="26" rx="94.500" ry="24.500" fill="none" stroke="#d433cf" strokeWidth="2" />
    </svg>
    <Mark n={1} className="left-[197px] top-[580px] bg-white" />
    <Mark n={2} className="left-[1310px] top-[174px]" />
    <Mark n={3} className="left-[729px] top-[609px]" />
  </div>
);

export default App;
